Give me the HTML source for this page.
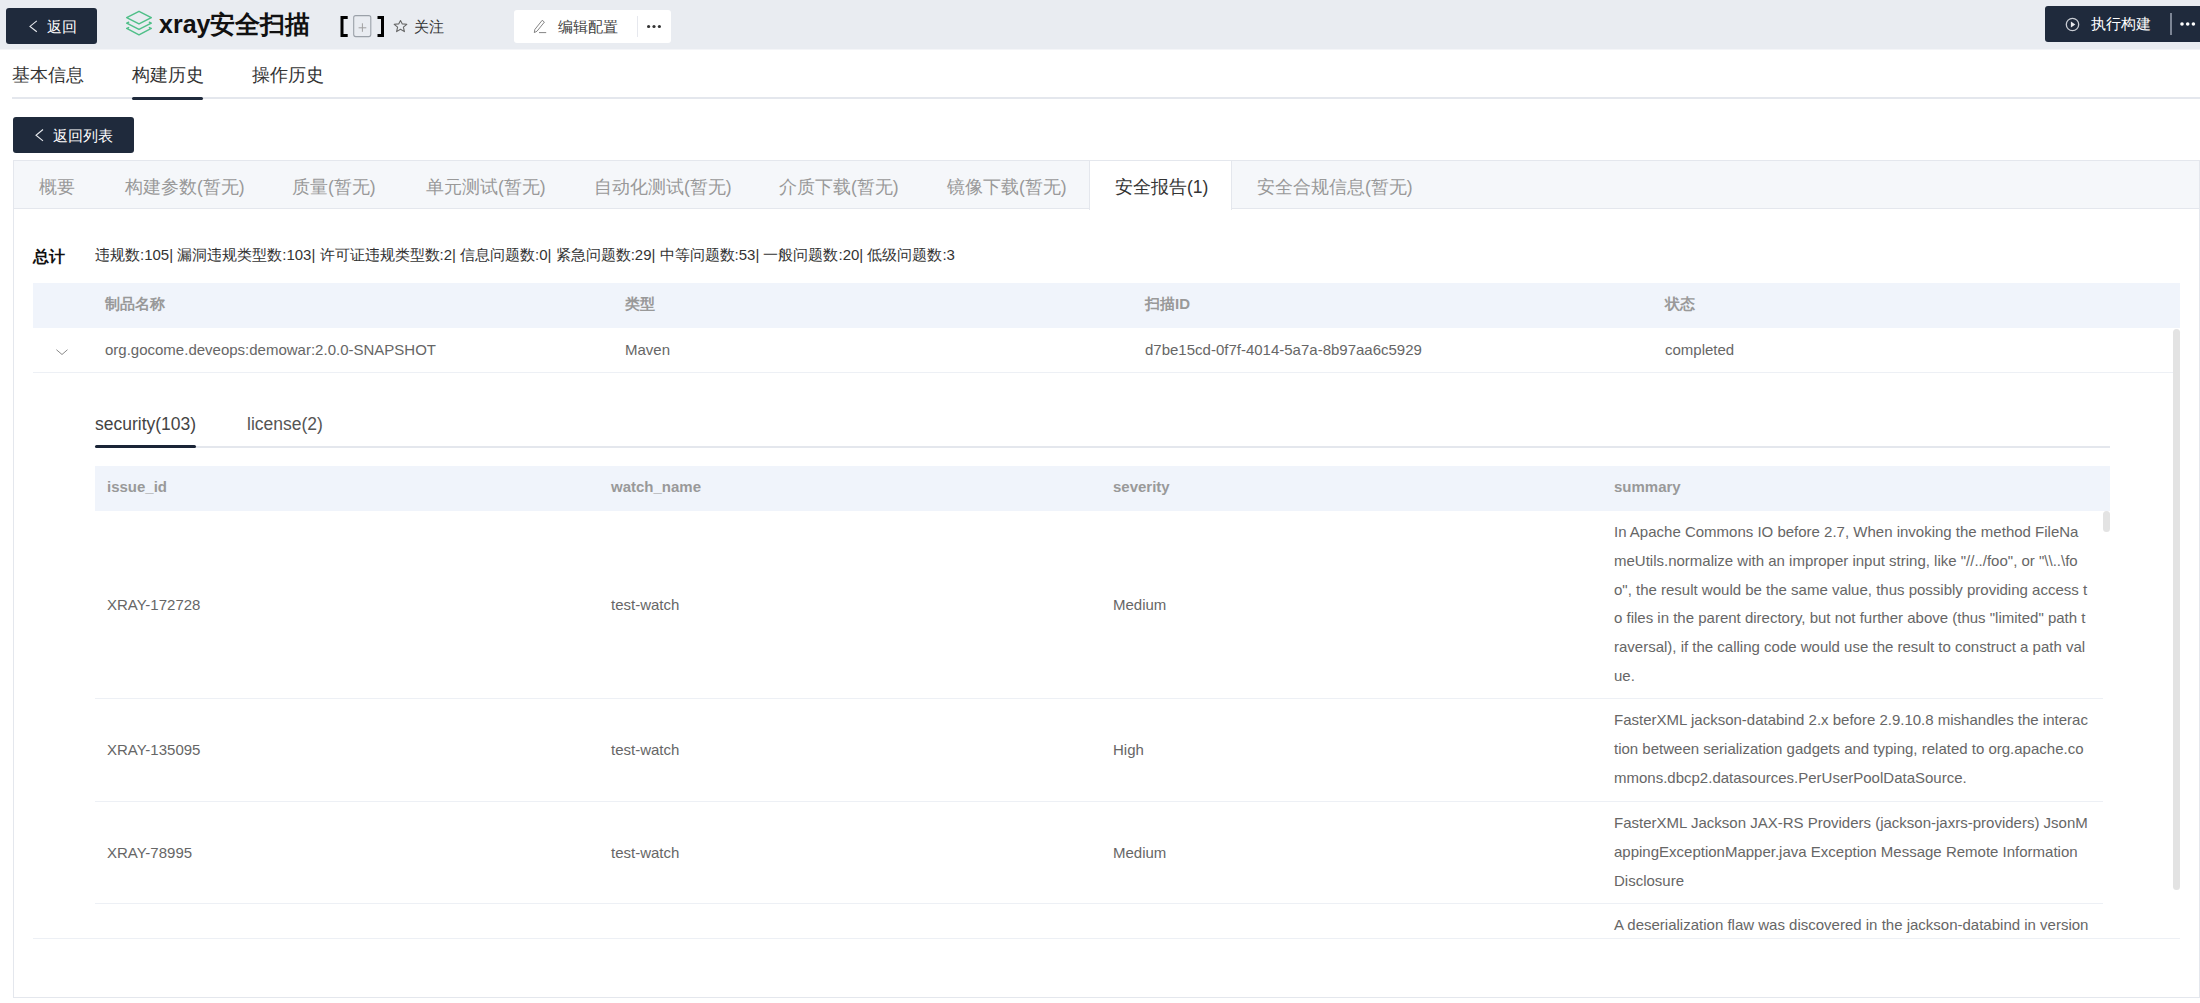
<!DOCTYPE html>
<html><head><meta charset="utf-8">
<style>
*{box-sizing:border-box;margin:0;padding:0}
html,body{width:2200px;height:1003px;overflow:hidden;background:#fff}
body{font-family:"Liberation Sans",sans-serif;color:#333;position:relative}
.abs{position:absolute;white-space:nowrap}
.hdr{position:absolute;left:0;top:0;width:2200px;height:49px;background:#e9ecf1}
.dbtn{position:absolute;background:#1f2a3c;border-radius:3px;color:#fff}
.wbtn{position:absolute;background:#fff;border-radius:3px}
.t15{font-size:15px;line-height:20px}
.t175{font-size:17.5px;line-height:24px}

.th{font-size:15px;line-height:20px;font-weight:bold;color:#999;white-space:nowrap}
.td{font-size:15px;line-height:20px;color:#666;white-space:nowrap}
.row{position:absolute;left:0;width:2008px;border-bottom:1px solid #edf0f5}
.row>div{position:absolute;font-size:15px;color:#666;white-space:nowrap}
.c1,.c2,.c3{top:50%;margin-top:-10px;line-height:20px}
.c1{left:12px}.c2{left:516px}.c3{left:1018px}
.sm{left:1519px;top:7px;line-height:28.75px}
</style></head><body>
<div class="hdr"></div><div class="abs" style="left:0;top:49px;width:2200px;height:1px;background:#f4f5f8"></div>
<!-- back button -->
<div class="dbtn" style="left:6px;top:8px;width:91px;height:36px"></div>
<div class="abs t15" style="left:47px;top:17px;color:#fff">返回</div>
<svg class="abs" style="left:28px;top:20px" width="12" height="14" viewBox="0 0 12 14"><path d="M8.8 0.9 L2 6.4 L8.8 11.8" fill="none" stroke="#e8eaee" stroke-width="1.1"/></svg>
<!-- stack icon -->
<svg class="abs" style="left:125px;top:10px" width="28" height="27" viewBox="0 0 28 27"><g fill="none" stroke="#4fbf88" stroke-width="1.5" stroke-linejoin="round" stroke-linecap="round"><path d="M14 1.3 L26.3 7.6 L14 13.9 L1.7 7.6 Z"/><path d="M3.6 12.3 L1.7 13.1 L14 19.4 L26.3 13.1 L24.4 12.3"/><path d="M3.6 17.6 L1.7 18.4 L14 24.8 L26.3 18.4 L24.4 17.6"/></g></svg>
<div class="abs" style="left:159px;top:8px;font-size:25px;line-height:32px;font-weight:bold;color:#111">xray安全扫描</div>
<svg class="abs" style="left:340px;top:15px" width="45" height="23" viewBox="0 0 45 23"><path d="M0.5 1 H7.7 V4 H3.5 V19 H7.7 V22 H0.5 Z" fill="#000"/><path d="M37.5 1 H44 V22 H37.5 V19 H41 V4 H37.5 Z" fill="#000"/><rect x="13.7" y="0.6" width="17.1" height="21" rx="2" fill="none" stroke="#9ba1a9" stroke-width="1.1"/><path d="M18.6 12.8 H26.3 M22.4 8.3 V16.8" stroke="#a0a0a0" stroke-width="1"/></svg>
<svg class="abs" style="left:392px;top:18px" width="17" height="16" viewBox="0 0 17 16"><path d="M8.5 2.5 L10.3 5.9 L14.8 6.3 L11.4 9.2 L12.4 13.6 L8.5 11.3 L4.6 13.6 L5.6 9.2 L2.2 6.3 L6.7 5.9 Z" fill="none" stroke="#666" stroke-width="1.1" stroke-linejoin="round"/></svg>
<div class="abs t15" style="left:414px;top:17px;color:#333">关注</div>
<!-- edit config -->
<div class="wbtn" style="left:514px;top:10px;width:157px;height:33px"></div>
<svg class="abs" style="left:532px;top:18px" width="16" height="16" viewBox="0 0 16 16"><path d="M2.3 14.6 L2.8 11.5 L10.2 2.3 L12.4 4.1 L5 13.2 Z M7 14.6 H14.2" fill="none" stroke="#777" stroke-width="0.9" stroke-linejoin="round"/></svg>
<div class="abs t15" style="left:558px;top:17px;color:#444">编辑配置</div>
<div class="abs" style="left:637px;top:16px;width:1px;height:21px;background:#e6e8ee"></div>
<svg class="abs" style="left:645px;top:23px" width="18" height="7" viewBox="0 0 18 7"><circle cx="3.6" cy="3.5" r="1.6" fill="#333"/><circle cx="9" cy="3.5" r="1.6" fill="#333"/><circle cx="14.4" cy="3.5" r="1.6" fill="#333"/></svg>
<!-- run build -->
<div class="dbtn" style="left:2045px;top:6px;width:170px;height:36px"></div>
<svg class="abs" style="left:2065px;top:17px" width="15" height="15" viewBox="0 0 15 15"><circle cx="7.5" cy="7.5" r="6.2" fill="none" stroke="#c8ccd3" stroke-width="1.3"/><path d="M5.9 4.6 L10.3 7.5 L5.9 10.4 Z" fill="#e8eaee"/></svg>
<div class="abs t15" style="left:2091px;top:14px;color:#fff">执行构建</div>
<div class="abs" style="left:2170px;top:13px;width:1.5px;height:22px;background:#7c8595"></div>
<svg class="abs" style="left:2178px;top:20px" width="20" height="8" viewBox="0 0 20 8"><circle cx="4" cy="4" r="1.8" fill="#fff"/><circle cx="9.7" cy="4" r="1.8" fill="#fff"/><circle cx="15.4" cy="4" r="1.8" fill="#fff"/></svg>

<!-- main tabs -->
<div class="abs t175" style="left:12px;top:63px;color:#333">基本信息</div>
<div class="abs t175" style="left:132px;top:63px;color:#333">构建历史</div>
<div class="abs t175" style="left:252px;top:63px;color:#333">操作历史</div>
<div class="abs" style="left:12px;top:97px;width:2188px;height:2px;background:#e4e7ed"></div>
<div class="abs" style="left:132px;top:97px;width:71px;height:3px;background:#1f2a3c;border-radius:1.5px"></div>

<!-- back to list -->
<div class="dbtn" style="left:13px;top:117px;width:121px;height:36px"></div>
<svg class="abs" style="left:34px;top:128px" width="12" height="14" viewBox="0 0 12 14"><path d="M9 1.5 L2 7.2 L9 12.9" fill="none" stroke="#e8eaee" stroke-width="1.1"/></svg>
<div class="abs t15" style="left:53px;top:126px;color:#fff">返回列表</div>

<!-- tab box -->
<div class="abs" style="left:13px;top:160px;width:2187px;height:838px;border:1px solid #e4e7ed;border-right-width:1px"></div>
<div class="abs" style="left:14px;top:161px;width:2185px;height:48px;background:#f5f7fa;border-bottom:1px solid #e4e7ed"></div>
<div class="abs" style="left:1089px;top:161px;width:143px;height:49px;background:#fff;border-left:1px solid #e4e7ed;border-right:1px solid #e4e7ed"></div>
<div class="abs t175" style="left:39px;top:175px;color:#999">概要</div>
<div class="abs t175" style="left:125px;top:175px;color:#999">构建参数(暂无)</div>
<div class="abs t175" style="left:292px;top:175px;color:#999">质量(暂无)</div>
<div class="abs t175" style="left:426px;top:175px;color:#999">单元测试(暂无)</div>
<div class="abs t175" style="left:594px;top:175px;color:#999">自动化测试(暂无)</div>
<div class="abs t175" style="left:779px;top:175px;color:#999">介质下载(暂无)</div>
<div class="abs t175" style="left:947px;top:175px;color:#999">镜像下载(暂无)</div>
<div class="abs t175" style="left:1115px;top:175px;color:#333">安全报告(1)</div>
<div class="abs t175" style="left:1257px;top:175px;color:#999">安全合规信息(暂无)</div>

<!-- summary -->
<div class="abs" style="left:33px;top:245px;font-size:16.25px;line-height:22px;font-weight:bold;color:#111">总计</div>
<div class="abs t15" style="left:95px;top:245px;color:#333">违规数:105| 漏洞违规类型数:103| 许可证违规类型数:2| 信息问题数:0| 紧急问题数:29| 中等问题数:53| 一般问题数:20| 低级问题数:3</div>


<!-- outer table -->
<div class="abs" style="left:33px;top:283px;width:2147px;height:45px;background:#f0f4fb"></div>
<div class="abs th" style="left:105px;top:294px">制品名称</div>
<div class="abs th" style="left:625px;top:294px">类型</div>
<div class="abs th" style="left:1145px;top:294px">扫描ID</div>
<div class="abs th" style="left:1665px;top:294px">状态</div>
<div class="abs" style="left:33px;top:372px;width:2140px;height:1px;background:#edf0f5"></div>
<svg class="abs" style="left:55px;top:344px" width="14" height="14" viewBox="0 0 14 14"><path d="M1.4 5.7 L7 10.5 L12.5 5.7" fill="none" stroke="#8a8a8a" stroke-width="1"/></svg>
<div class="abs td" style="left:105px;top:340px">org.gocome.deveops:demowar:2.0.0-SNAPSHOT</div>
<div class="abs td" style="left:625px;top:340px">Maven</div>
<div class="abs td" style="left:1145px;top:340px">d7be15cd-0f7f-4014-5a7a-8b97aa6c5929</div>
<div class="abs td" style="left:1665px;top:340px">completed</div>
<div class="abs" style="left:2173px;top:329px;width:7px;height:561px;background:#e3e3e3;border-radius:4px"></div>
<div class="abs" style="left:33px;top:938px;width:2147px;height:1px;background:#edf0f5"></div>

<!-- inner tabs -->
<div class="abs" style="left:95px;top:412px;font-size:17.5px;line-height:24px;color:#444">security(103)</div>
<div class="abs" style="left:247px;top:412px;font-size:17.5px;line-height:24px;color:#555">license(2)</div>
<div class="abs" style="left:95px;top:446px;width:2015px;height:2px;background:#e4e7ed"></div>
<div class="abs" style="left:95px;top:445px;width:101px;height:3px;background:#1a2436;border-radius:1.5px"></div>

<!-- inner table -->
<div class="abs" style="left:95px;top:466px;width:2015px;height:45px;background:#f0f4fb"></div>
<div class="abs th" style="left:107px;top:477px">issue_id</div>
<div class="abs th" style="left:611px;top:477px">watch_name</div>
<div class="abs th" style="left:1113px;top:477px">severity</div>
<div class="abs th" style="left:1614px;top:477px">summary</div>
<div class="abs" style="left:2103px;top:511px;width:7px;height:21px;background:#e3e3e3;border-radius:4px"></div>
<div class="clip" style="position:absolute;left:95px;top:511px;width:2008px;height:427px;overflow:hidden">
 <div class="row" style="top:0;height:188px">
  <div class="c1">XRAY-172728</div><div class="c2">test-watch</div><div class="c3">Medium</div>
  <div class="sm">In Apache Commons IO before 2.7, When invoking the method FileNa<br>meUtils.normalize with an improper input string, like "//../foo", or "\\..\fo<br>o", the result would be the same value, thus possibly providing access t<br>o files in the parent directory, but not further above (thus "limited" path t<br>raversal), if the calling code would use the result to construct a path val<br>ue.</div>
 </div>
 <div class="row" style="top:188px;height:103px">
  <div class="c1">XRAY-135095</div><div class="c2">test-watch</div><div class="c3">High</div>
  <div class="sm">FasterXML jackson-databind 2.x before 2.9.10.8 mishandles the interac<br>tion between serialization gadgets and typing, related to org.apache.co<br>mmons.dbcp2.datasources.PerUserPoolDataSource.</div>
 </div>
 <div class="row" style="top:291px;height:102px">
  <div class="c1">XRAY-78995</div><div class="c2">test-watch</div><div class="c3">Medium</div>
  <div class="sm">FasterXML Jackson JAX-RS Providers (jackson-jaxrs-providers) JsonM<br>appingExceptionMapper.java Exception Message Remote Information<br>Disclosure</div>
 </div>
 <div class="row" style="top:393px;height:188px">
  <div class="c1">XRAY-00000</div><div class="c2">test-watch</div><div class="c3">Medium</div>
  <div class="sm">A deserialization flaw was discovered in the jackson-databind in version<br>s 2.0.0 through 2.9.10.x, which could allow an unauthenticated user to<br>perform code execution.</div>
 </div>
</div>
</body></html>
